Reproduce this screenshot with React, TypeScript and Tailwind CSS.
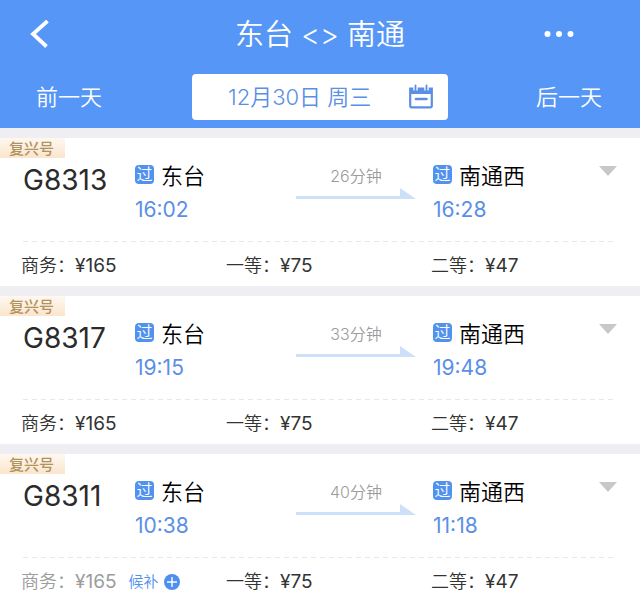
import React from "react";

interface Seat {
  name: string;
  price: string;
  waitlist?: boolean;
}

interface Train {
  number: string;
  departure: string;
  arrival: string;
  duration: string;
  seats: Seat[];
}

const trains: Train[] = [
  {
    number: "G8313",
    departure: "16:02",
    arrival: "16:28",
    duration: "26分钟",
    seats: [
      { name: "商务", price: "¥165" },
      { name: "一等", price: "¥75" },
      { name: "二等", price: "¥47" },
    ],
  },
  {
    number: "G8317",
    departure: "19:15",
    arrival: "19:48",
    duration: "33分钟",
    seats: [
      { name: "商务", price: "¥165" },
      { name: "一等", price: "¥75" },
      { name: "二等", price: "¥47" },
    ],
  },
  {
    number: "G8311",
    departure: "10:38",
    arrival: "11:18",
    duration: "40分钟",
    seats: [
      { name: "商务", price: "¥165", waitlist: true },
      { name: "一等", price: "¥75" },
      { name: "二等", price: "¥47" },
    ],
  },
];

const Header: React.FC = () => (
  <header className="bg-[#5596f6] pb-2 text-white">
    <div className="grid h-[68px] grid-cols-3 items-center">
      <button className="ml-[30px] justify-self-start" aria-label="返回">
        <svg width="20" height="28" viewBox="0 0 20 28" fill="none" className="block">
          <path d="M17.5 1 3 14l13.5 12.5" stroke="white" strokeWidth="3.8" />
        </svg>
      </button>
      <h1 className="whitespace-nowrap pt-0.5 text-center text-[29px] leading-10">
        东台 &lt;&gt; 南通
      </h1>
      <button className="mr-[65px] justify-self-end" aria-label="更多">
        <svg width="32" height="8" viewBox="0 0 32 8" fill="white" className="block">
          <circle cx="4.5" cy="4" r="3" />
          <circle cx="16" cy="4" r="3" />
          <circle cx="27.5" cy="4" r="3" />
        </svg>
      </button>
    </div>

    {/* Date switcher */}
    <div className="mt-1.5 grid grid-cols-[3fr_4fr_3fr] items-center text-[22px]">
      <button className="ml-9 justify-self-start">前一天</button>
      <button className="flex h-[46px] items-center justify-between rounded bg-white pl-9 pr-3.5 text-[#5b8fe6]">
        <span className="whitespace-nowrap">12月30日 周三</span>
        <svg width="26" height="26" viewBox="0 0 26 26" fill="none">
          <path
            d="M2.2 4.5h21.6v17.3a1.5 1.5 0 0 1-1.5 1.5H3.7a1.5 1.5 0 0 1-1.5-1.5Z"
            stroke="#5b8fe6"
            strokeWidth="2.2"
          />
          <path d="M2 4h22v6H2z" fill="#5b8fe6" />
          <path d="M7.5 1v5.5M18.5 1v5.5" stroke="white" strokeWidth="4.4" />
          <path d="M7.5 1.5v5M18.5 1.5v5" stroke="#5b8fe6" strokeWidth="1.8" strokeLinecap="round" />
          <path d="M8 15h10.5" stroke="#5b8fe6" strokeWidth="2.6" strokeLinecap="round" />
        </svg>
      </button>
      <button className="mr-[38px] justify-self-end">后一天</button>
    </div>
  </header>
);

const Stop: React.FC<{ station: string; time: string }> = ({ station, time }) => (
  <div className="whitespace-nowrap pt-1">
    <div className="flex h-7 items-center gap-[7px] text-[22px] leading-7 text-black">
      <span className="mb-1 flex size-[19px] items-center justify-center rounded bg-[#5192ee] text-base leading-none text-white">
        过
      </span>
      {station}
    </div>
    <div className="mt-1 text-[21px] font-normal leading-8 text-[#5b8fe6]">{time}</div>
  </div>
);

const TrainCard: React.FC<{ train: Train }> = ({ train }) => (
  <li className="bg-white">
    <div className="flex h-5 w-[65px] items-end bg-gradient-to-b from-[#fef8f0] to-[#fbe5cd] pl-[9px] text-[15px] font-medium leading-[18px] text-[#b0925f]">
      复兴号
    </div>
    <div className="mx-[23px] grid h-[83px] grid-cols-[112fr_161fr_137fr_184fr]">
      <h2 className="text-[28px] font-normal leading-11 text-[#2b2b2b]">{train.number}</h2>
      <Stop station="东台" time={train.departure} />
      <div className="w-[120px] pt-1.5 text-center text-base leading-6 text-[#9c9c9c]">
        {train.duration}
        <svg width="120" height="12" viewBox="0 0 120 12" fill="#cde0fa" className="block">
          <path d="M0 8h104V0l16 11H0Z" />
        </svg>
      </div>
      <div className="flex items-start justify-between">
        <Stop station="南通西" time={train.arrival} />
        <button className="mt-2" aria-label="展开">
          <svg width="18" height="10" viewBox="0 0 18 10" fill="#c8c8c8" className="block">
            <path d="M0 0h18L9 10Z" />
          </svg>
        </button>
      </div>
    </div>
    <div className="mx-[23px] h-px bg-[repeating-linear-gradient(to_right,#e8e8e8_0_5px,transparent_5px_9px)]" />
    <div className="grid h-11 grid-cols-3 items-center pl-[21px] pr-1 pt-1 text-lg text-[#333333]">
      {train.seats.map((seat) => (
        <div key={seat.name} className="flex items-center whitespace-nowrap">
          <div className={seat.waitlist ? "flex items-baseline text-[#9c9c9c]" : "flex items-baseline"}>
            {seat.name}：<span className="text-[19px] font-normal">{seat.price}</span>
          </div>
          {seat.waitlist && (
            <button className="ml-3 flex items-center gap-[5px] text-[15px] text-[#4f8ff0]">
              候补
              <svg width="16" height="16" viewBox="0 0 16 16" fill="none">
                <circle cx="8" cy="8" r="8" fill="#4f8ff0" />
                <path d="M8 3v10M3 8h10" stroke="white" strokeWidth="1.4" />
              </svg>
            </button>
          )}
        </div>
      ))}
    </div>
  </li>
);

const App: React.FC = () => (
  <div
    lang="zh-CN"
    className="min-h-screen bg-white font-[Inter,'Noto_Sans_CJK_SC',sans-serif] font-[350]"
  >
    <Header />
    <ul className="flex flex-col gap-2.5 bg-[#eeeef3] pt-2.5">
      {trains.map((train) => (
        <TrainCard key={train.number} train={train} />
      ))}
    </ul>
  </div>
);

export default App;
